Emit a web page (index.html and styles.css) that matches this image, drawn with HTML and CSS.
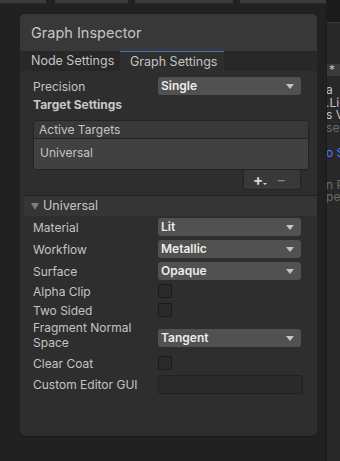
FILE: index.html
```html
<!DOCTYPE html>
<html>
<head>
    <meta charset="UTF-8">
    <title>Graph Inspector</title>
    <link rel="stylesheet" href="styles.css">
</head>
<body>
    <div class="toolbar">
        <div class="tool-tab t1"></div>
        <div class="tool-tab t2"></div>
        <div class="tool-tab t3"></div>
        <div class="tool-tab t4"></div>
    </div>

    <div class="workspace">
        <div class="inspector">
            <div class="inspector-title">Graph Inspector</div>

            <div class="tabs">
                <div class="tab">Node Settings</div>
                <div class="tab active">Graph Settings</div>
            </div>

            <div class="content">
                <div class="row">
                    <div class="label">Precision</div>
                    <div class="dropdown">Single<span class="caret"></span></div>
                </div>
                <div class="heading">Target Settings</div>

                <div class="list">
                    <div class="list-header">Active Targets</div>
                    <div class="list-item">Universal</div>
                </div>
                <div class="list-footer">
                    <span class="add">+<span class="add-caret"></span></span>
                    <span class="remove">−</span>
                </div>
            </div>

            <div class="foldout"><span class="tri"></span>Universal</div>

            <div class="content props">
                <div class="row">
                    <div class="label">Material</div>
                    <div class="dropdown">Lit<span class="caret"></span></div>
                </div>
                <div class="row">
                    <div class="label">Workflow</div>
                    <div class="dropdown">Metallic<span class="caret"></span></div>
                </div>
                <div class="row">
                    <div class="label">Surface</div>
                    <div class="dropdown">Opaque<span class="caret"></span></div>
                </div>
                <div class="row check-row">
                    <div class="label">Alpha Clip</div>
                    <div class="checkbox"></div>
                </div>
                <div class="row check-row">
                    <div class="label">Two Sided</div>
                    <div class="checkbox"></div>
                </div>
                <div class="row tall-row">
                    <div class="label">Fragment Normal<br>Space</div>
                    <div class="dropdown">Tangent<span class="caret"></span></div>
                </div>
                <div class="row check-row clear-row">
                    <div class="label">Clear Coat</div>
                    <div class="checkbox"></div>
                </div>
                <div class="row">
                    <div class="label">Custom Editor GUI</div>
                    <div class="textfield"></div>
                </div>
            </div>
        </div>

        <div class="side-panel">
            <div class="side-top"></div>
            <div class="side-bar">*</div>
            <div class="side-text first">a</div>
            <div class="side-text">.Lig</div>
            <div class="side-text">s V</div>
            <div class="side-text dim">set</div>
            <div class="side-text link">o S</div>
            <div class="side-text dim gap">n P</div>
            <div class="side-text dim">pe</div>
        </div>
    </div>
</body>
</html>
```

FILE: styles.css
```css
body {
    margin: 0;
    background: #212121;
    font-family: Inter, 'Noto Sans', sans-serif;
    font-size: 12px;
    color: #c4c4c4;
    height: 461px;
    overflow: hidden;
}
.toolbar {
    height: 4px;
    position: relative;
}
.tool-tab {
    position: absolute;
    top: 0;
    height: 3px;
    background: #3a3a3a;
    border-bottom: 1px solid #2a2a2a;
}
.t1 { left: 0; width: 46px; }
.t2 { left: 55px; width: 73px; }
.t3 { left: 135px; width: 98px; }
.t4 { left: 240px; width: 86px; }
.workspace {
    display: flex;
    align-items: flex-start;
}
.inspector {
    margin: 10px 0 0 20px;
    width: 298px;
    height: 422px;
    background: #2e2e2e;
    border-radius: 5px;
    box-shadow: 0 1px 0 #1a1a1a;
    overflow: hidden;
}
.inspector-title {
    height: 37px;
    background: #383838;
    padding-left: 11px;
    font-size: 14.5px;
    line-height: 37px;
    color: #c6c6c6;
}
.tabs {
    display: flex;
    height: 20px;
    background: #282828;
}
.tab {
    width: 89px;
    padding-left: 11px;
    line-height: 20px;
    font-size: 12.5px;
    color: #c4c4c4;
}
.tab.active {
    width: 94px;
    padding-left: 10px;
    background: #2e2e2e;
    border-top: 1px solid #3a79bb;
    line-height: 19px;
}
.content {
    padding: 6px 0 0 13px;
}
.row {
    display: flex;
    align-items: center;
    height: 18px;
    margin-bottom: 4px;
}
.label {
    width: 125px;
    flex-shrink: 0;
    line-height: 15px;
}
.dropdown {
    position: relative;
    width: 140px;
    height: 18px;
    padding-left: 3px;
    background: #515151;
    border-radius: 3px;
    color: #ececec;
    font-weight: 600;
    line-height: 18px;
}
.caret {
    position: absolute;
    right: 7px;
    top: 7px;
    border-left: 4px solid transparent;
    border-right: 4px solid transparent;
    border-top: 5px solid #c4c4c4;
}
.heading {
    font-weight: 700;
    color: #c8c8c8;
    line-height: 14px;
    margin: -1px 0 0;
}
.list {
    margin-top: 8px;
    width: 274px;
    border: 1px solid #232323;
    border-radius: 3px;
    overflow: hidden;
}
.list-header {
    height: 17px;
    line-height: 17px;
    padding-left: 5px;
    background: #393939;
    border-bottom: 1px solid #232323;
}
.list-item {
    height: 30px;
    line-height: 28px;
    padding-left: 6px;
    background: #414141;
}
.list-footer {
    margin-left: 210px;
    width: 56px;
    height: 19px;
    background: #393939;
    border: 1px solid #232323;
    border-top: none;
    border-radius: 0 0 3px 3px;
    display: flex;
    align-items: center;
    font-size: 15px;
    line-height: 18px;
}
.add {
    position: relative;
    margin-left: 9px;
    color: #d8d8d8;
    font-weight: 700;
}
.add-caret {
    position: absolute;
    right: -4px;
    bottom: 4px;
    border-left: 2px solid transparent;
    border-right: 2px solid transparent;
    border-top: 2px solid #d8d8d8;
}
.remove {
    margin-left: 13px;
    color: #8a8a8a;
}
.foldout {
    margin: 5px 0 0 4px;
    height: 20px;
    line-height: 20px;
    background: #353535;
    border-top: 1px solid #222;
    font-size: 12.5px;
    display: flex;
    align-items: center;
}
.tri {
    margin: 0 4px 0 7px;
    border-left: 4px solid transparent;
    border-right: 4px solid transparent;
    border-top: 7px solid #7e7e7e;
}
.props {
    padding-top: 2px;
}
.check-row {
    height: 14px;
    margin-bottom: 5px;
}
.clear-row {
    margin-top: 1px;
}
.checkbox {
    width: 12px;
    height: 12px;
    background: #2a2a2a;
    border: 1px solid #1b1b1b;
    border-radius: 2px;
}
.tall-row {
    height: 30px;
    align-items: flex-start;
}
.tall-row .label {
    margin-top: -2px;
}
.tall-row .dropdown {
    margin-top: 7px;
}
.textfield {
    width: 143px;
    height: 17px;
    background: #2a2a2a;
    border: 1px solid #212121;
    border-radius: 3px;
}
.side-panel {
    margin-left: 9px;
    width: 13px;
    height: 461px;
    margin-top: -4px;
    background: #282828;
    border-left: 1px solid #1b1b1b;
    overflow: hidden;
    white-space: nowrap;
    font-size: 12px;
    color: #c4c4c4;
}
.side-top {
    height: 22px;
    background: #1b1b1b;
    border-bottom: 1px solid #3a3a3a;
    margin-bottom: 41px;
}
.side-bar {
    height: 12px;
    line-height: 12px;
    background: #3a3a3a;
    padding-left: 2px;
}
.side-text {
    line-height: 12.7px;
    margin-left: -1px;
}
.side-text.first {
    margin-top: 8px;
}
.side-text.dim {
    color: #6a6a6a;
}
.side-text.link {
    color: #4c7dff;
    margin-top: 12px;
}
.side-text.gap {
    margin-top: 19px;
}
```
